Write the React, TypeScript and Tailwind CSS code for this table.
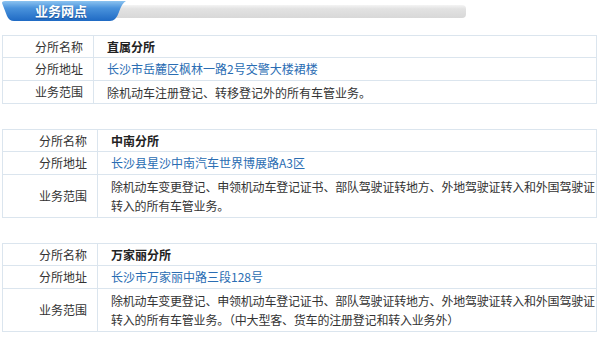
const branches = [
  {
    name: "直属分所",
    address: "长沙市岳麓区枫林一路2号交警大楼裙楼",
    scope: ["除机动车注册登记、转移登记外的所有车管业务。"],
    labelWidth: "grid-cols-[91px_1fr]",
  },
  {
    name: "中南分所",
    address: "长沙县星沙中南汽车世界博展路A3区",
    scope: [
      "除机动车变更登记、申领机动车登记证书、部队驾驶证转地方、外地驾驶证转入和外国驾驶证",
      "转入的所有车管业务。",
    ],
    labelWidth: "grid-cols-[95px_1fr]",
  },
  {
    name: "万家丽分所",
    address: "长沙市万家丽中路三段128号",
    scope: [
      "除机动车变更登记、申领机动车登记证书、部队驾驶证转地方、外地驾驶证转入和外国驾驶证",
      "转入的所有车管业务。（中大型客、货车的注册登记和转入业务外）",
    ],
    labelWidth: "grid-cols-[95px_1fr]",
  },
];

function Header() {
  return (
    <div className="relative h-[22px] w-[600px]">
      <svg width="600" height="22" className="absolute left-0 top-0">
        <defs>
          <linearGradient id="tab" x1="0" y1="0" x2="0" y2="1">
            <stop offset="0" stopColor="#8cc3f0" />
            <stop offset="0.35" stopColor="#4a93dc" />
            <stop offset="1" stopColor="#1f6ac4" />
          </linearGradient>
          <linearGradient id="bar" x1="0" y1="0" x2="0" y2="1">
            <stop offset="0" stopColor="#f4f4f4" />
            <stop offset="0.3" stopColor="#e2e2e2" />
            <stop offset="1" stopColor="#d8d8d8" />
          </linearGradient>
          <linearGradient id="line" x1="0" y1="0" x2="1" y2="0">
            <stop offset="0" stopColor="#c9d6e2" />
            <stop offset="1" stopColor="#e6edf3" />
          </linearGradient>
        </defs>
        <path d="M112 5 H462 Q466 5 466 9 V14 Q466 18 462 18 H112 Z" fill="url(#bar)" />
        <path d="M466 12 H600" stroke="url(#line)" strokeWidth="1" />
        <path
          d="M2 3 Q2 1 5 1 H126 Q122 3 119 12 Q116 21 110 21 H14 Q9 21 7 16 Z"
          fill="url(#tab)"
        />
      </svg>
      <span className="absolute left-[35px] top-[3px] text-[13px] font-bold leading-[16px] text-white [font-family:'Noto_Sans_CJK_SC',sans-serif] [text-shadow:0_1px_1px_rgba(0,40,100,0.5)]">
        业务网点
      </span>
    </div>
  );
}

function BranchTable({ b }: { b: (typeof branches)[number] }) {
  const row = `grid ${b.labelWidth} border-b border-[#dbe5ee]`;
  const label =
    "flex items-center justify-end border-r border-[#dbe5ee] pr-[10px] text-[#333]";
  const multi = b.scope.length > 1;
  return (
    <div className="ml-[2px] w-[595px] border border-[#dbe5ee] text-[12px] [font-family:'Noto_Sans_CJK_SC',sans-serif]">
      <div className={`${row} h-[22px]`}>
        <div className={label}>分所名称</div>
        <div className="flex items-center pl-[13px] font-bold text-[#222]">
          {b.name}
        </div>
      </div>
      <div className={`${row} h-[23px]`}>
        <div className={label}>分所地址</div>
        <div className="flex items-center pl-[13px] text-[#2a6db3]">
          {b.address}
        </div>
      </div>
      <div className={`grid ${b.labelWidth} ${multi ? "h-[42px]" : "h-[22px]"}`}>
        <div className={label}>业务范围</div>
        <div
          className={`flex flex-col justify-center pl-[13px] leading-[19px] text-[#333] ${
            multi ? "tracking-[-0.2px]" : ""
          }`}
        >
          {b.scope.map((line) => (
            <span key={line} className="whitespace-nowrap">
              {line}
            </span>
          ))}
        </div>
      </div>
    </div>
  );
}

export default function App() {
  return (
    <div className="h-[338px] w-[600px] overflow-hidden bg-white">
      <Header />
      <div className="mt-[13px] flex flex-col gap-[25px]">
        {branches.map((b) => (
          <BranchTable key={b.name} b={b} />
        ))}
      </div>
    </div>
  );
}
